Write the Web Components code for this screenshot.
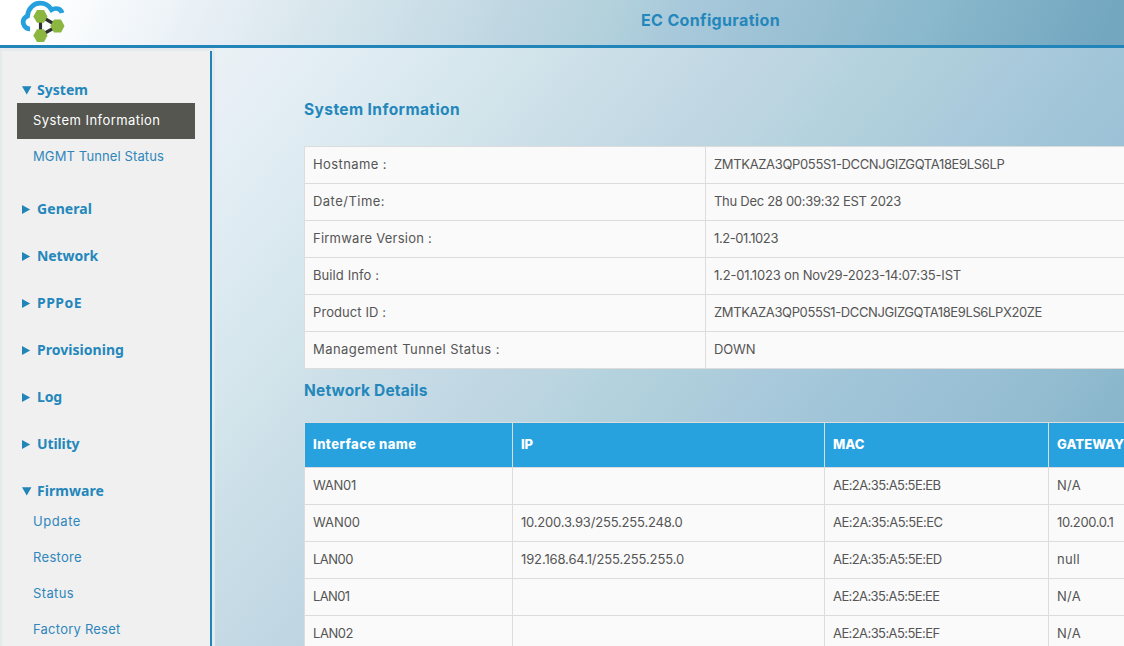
<!DOCTYPE html>
<html lang="en">
<head>
<meta charset="utf-8">
<title>EC Configuration</title>
<style>
html,body{margin:0;height:100%;overflow:hidden}
body{font-family:Inter,"Open Sans",sans-serif;font-size:13px;color:#555}
</style>
</head>
<body>
<ec-app></ec-app>
<script>
const define = (name, html, setup) => customElements.define(name, class extends HTMLElement {
  connectedCallback() {
    if (this.shadowRoot) return;
    this.attachShadow({mode: 'open'}).innerHTML = html;
    if (setup) setup.call(this, this.shadowRoot);
  }
});

// Text run whose tracking is adjusted to fill the width given in "w".
define('fit-text', `<style>:host{display:inline-block;white-space:nowrap}</style><span><slot></slot></span>`, function (root) {
  const span = root.querySelector('span');
  const natural = span.getBoundingClientRect().width;
  const n = this.textContent.length;
  if (n && natural) span.style.letterSpacing = ((+this.getAttribute('w') - natural) / n).toFixed(3) + 'px';
});
const fit = ([text, w]) => text ? `<fit-text w="${w}">${text}</fit-text>` : '';

define('ec-logo', `<style>:host{display:block;width:50px;height:45px}svg{display:block}</style>
<svg width="50" height="45" viewBox="18 0 50 45">
  <path d="M30 28.800C25.500 29 22.500 24.500 23.300 20.500Q24.200 17.300 27.500 16C28 8.500 33.500 3.200 40 3.200C45.500 3.200 49.300 6 51.500 9.800C55.500 7.300 61 8.500 62 13" fill="none" stroke="#27a0de" stroke-width="4.700"/>
  <path d="M40.500 16V35M40.500 16L57.500 26L40.500 35.500" fill="none" stroke="#2c3033" stroke-width="3.200"/>
  <g fill="#8bb63f"><path d="M33.300 16.400L37 10H44L47.500 16.400L44 22.800H37Z"/><path d="M50.300 26L54 19.600H61L64.500 26L61 32.400H54Z"/><path d="M33.300 35.500L37 29.200H44L47.500 35.500L44 42H37Z"/></g>
</svg>`);

define('ec-header', `<style>
:host{display:flex;box-sizing:border-box;height:48px;border-bottom:3px solid #2185b9;padding-left:18px;
background:linear-gradient(115deg,#fff 4%,#e7eff5 19%,#d7e6ec 29%,#c9dde7 39%,#bbd4e0 48%,#b4d2dc 53%,#a8c9db 60%,#9ac0d3 71%,#8ab8cc 82%,#73a7c0 98%)}
h1{margin:0 0 0 573px;font-size:16px;line-height:40px;font-weight:700;color:#2487bb}
</style><ec-logo></ec-logo><h1>${fit(['EC Configuration', 139])}</h1>`);

define('ec-item', `<style>
:host{display:block;height:36px;line-height:35px;padding-left:16px;color:#2f86bb}
:host([active]){background:#555650;color:#fff}
</style><slot></slot>`);

define('ec-group', `<style>
:host{display:block}
.head{display:flex;align-items:center;height:26px;padding-left:5px;font:700 14px/26px "Noto Sans",sans-serif;color:#2487bb}
svg{width:10px;height:10px;margin-right:5px;flex:none}
</style><div class="head"><svg viewBox="0 0 10 10"><path fill="#2185b9"/></svg><slot name="label"></slot></div><slot></slot>`, function (root) {
  root.querySelector('path').setAttribute('d', this.hasAttribute('open') ? 'M0 1.200H9.500L4.750 9.500Z' : 'M0 1L8.200 5.500L0 10Z');
});

const menu = [
  ['System', 51, [['System Information', 127.5], ['MGMT Tunnel Status', 131]]],
  ['General', 55], ['Network', 61], ['PPPoE', 45], ['Provisioning', 87], ['Log', 25], ['Utility', 42.5],
  ['Firmware', 67, [['Update', 48], ['Restore', 49], ['Status', 41], ['Factory Reset', 87.5]]]
];
define('ec-sidebar', `<style>
:host{display:block;box-sizing:border-box;width:215px;background:#e5eaed;padding:3px 3px 0 2px;overflow:hidden}
nav{box-sizing:border-box;height:100%;background:#f0f0f0;border-right:2px solid #2185b9;padding:26px 15px 0;display:flex;flex-direction:column;gap:21px}
</style><nav>${menu.map(([name, w, items]) => `<ec-group${items ? ' open' : ''}><span slot="label">${fit([name, w])}</span>${
  (items || []).map(i => `<ec-item${i[0] === 'System Information' ? ' active' : ''}>${fit(i)}</ec-item>`).join('')}</ec-group>`).join('')}</nav>`);

define('ec-title', `<style>
:host{display:block;height:24px;line-height:26px;font-size:15.5px;font-weight:700;color:#2487bb}
</style><slot></slot>`);

define('ec-cell', `<style>
:host{display:block;height:36px;line-height:35px;padding-left:8px;background:#fafafa}
:host([head]){height:44px;line-height:43px;background:#27a2df;color:#fff;font-weight:800}
</style><slot></slot>`);

define('ec-grid', `<style>
:host{display:grid;gap:1px;background:#dcdcdc;border:1px solid #dcdcdc;width:max-content}
</style><slot></slot>`, function () {
  this.style.gridTemplateColumns = this.getAttribute('columns');
});
const cells = (rows, head) => rows.map(r => r.map(c => `<ec-cell${head ? ' head' : ''}>${fit(c)}</ec-cell>`).join('')).join('');

const info = [
  [['Hostname :', 74], ['ZMTKAZA3QP055S1-DCCNJGIZGQTA18E9LS6LP', 290.5]],
  [['Date/Time:', 72], ['Thu Dec 28 00:39:32 EST 2023', 187]],
  [['Firmware Version :', 119], ['1.2-01.1023', 64]],
  [['Build Info :', 66], ['1.2-01.1023 on Nov29-2023-14:07:35-IST', 247]],
  [['Product ID :', 73], ['ZMTKAZA3QP055S1-DCCNJGIZGQTA18E9LS6LPX20ZE', 328]],
  [['Management Tunnel Status :', 187], ['DOWN', 41.5]]
];
const columns = [[['Interface name', 103.5], ['IP', 12], ['MAC', 31.5], ['GATEWAY', 67]]];
const network = [
  [['WAN01', 43], [''], ['AE:2A:35:A5:5E:EB', 107.5], ['N/A', 24]],
  [['WAN00', 47], ['10.200.3.93/255.255.248.0', 161.5], ['AE:2A:35:A5:5E:EC', 109.5], ['10.200.0.1', 56.5]],
  [['LAN00', 40], ['192.168.64.1/255.255.255.0', 163], ['AE:2A:35:A5:5E:ED', 108.5], ['null', 23]],
  [['LAN01', 36.5], [''], ['AE:2A:35:A5:5E:EE', 106.5], ['N/A', 24]],
  [['LAN02', 40], [''], ['AE:2A:35:A5:5E:EF', 106.5], ['N/A', 24]]
];
define('ec-main', `<style>
:host{display:flex;flex-direction:column;overflow:hidden;padding:49px 0 0 89px;
background:linear-gradient(129deg,#e9f1f3 0,#e8eff6 4%,#e3eef4 8%,#d9e8ef 17%,#d2e5eb 23%,#cde0e9 27%,#c2d8e4 37%,#bcd5e1 43%,#b5d3de 47%,#adcddb 55%,#abcbdd 57%,#a2c6d8 64%,#9dc2d7 70%,#93bcd0 80%,#8ab7cc 85%,#7dafc6 100%)}
ec-title:first-of-type{margin-bottom:25px}
ec-title:last-of-type{margin:9px 0 20px}
</style>
<ec-title>${fit(['System Information', 156])}</ec-title>
<ec-grid columns="400px 600px">${cells(info)}</ec-grid>
<ec-title>${fit(['Network Details', 123.5])}</ec-title>
<ec-grid columns="207px 311px 223px 257px">${cells(columns, true)}${cells(network)}</ec-grid>`);

define('ec-app', `<style>
:host{display:flex;flex-direction:column;height:100vh;overflow:hidden}
.body{flex:1;min-height:0;display:flex}
ec-sidebar{flex:none}ec-main{flex:1;min-width:0}
</style><ec-header></ec-header><div class="body"><ec-sidebar></ec-sidebar><ec-main></ec-main></div>`);
</script>
</body>
</html>
